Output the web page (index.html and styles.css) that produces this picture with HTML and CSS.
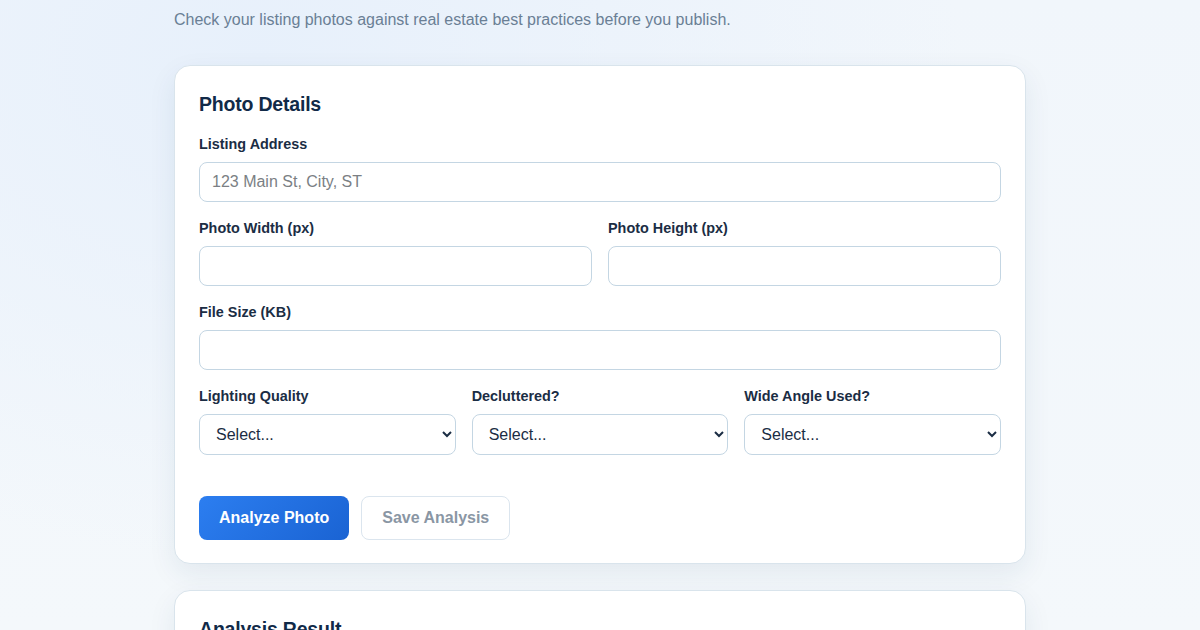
FILE: index.html
```html
<!DOCTYPE html>
<html lang="en">
<head>
<meta charset="utf-8">
<title>Listing Photo Checker</title>
<link rel="stylesheet" href="styles.css">
</head>
<body>
<main class="page">
  <p class="subtitle">Check your listing photos against real estate best practices before you publish.</p>

  <section class="card">
    <h2 class="card-title">Photo Details</h2>
    <form class="form">
      <div class="field">
        <label class="label" for="addr">Listing Address</label>
        <input class="input" id="addr" type="text" placeholder="123 Main St, City, ST">
      </div>
      <div class="row row-2">
        <div class="field">
          <label class="label" for="w">Photo Width (px)</label>
          <input class="input" id="w" type="text">
        </div>
        <div class="field">
          <label class="label" for="h">Photo Height (px)</label>
          <input class="input" id="h" type="text">
        </div>
      </div>
      <div class="field">
        <label class="label" for="size">File Size (KB)</label>
        <input class="input" id="size" type="text">
      </div>
      <div class="row row-3">
        <div class="field">
          <label class="label" for="light">Lighting Quality</label>
          <select class="select" id="light"><option>Select...</option></select>
        </div>
        <div class="field">
          <label class="label" for="declutter">Decluttered?</label>
          <select class="select" id="declutter"><option>Select...</option></select>
        </div>
        <div class="field">
          <label class="label" for="wide">Wide Angle Used?</label>
          <select class="select" id="wide"><option>Select...</option></select>
        </div>
      </div>
      <div class="actions">
        <button type="button" class="btn btn-primary">Analyze Photo</button>
        <button type="button" class="btn btn-secondary">Save Analysis</button>
      </div>
    </form>
  </section>

  <section class="card">
    <h2 class="card-title">Analysis Result</h2>
  </section>
</main>
</body>
</html>
```

FILE: styles.css
```css
* { box-sizing: border-box; }

html, body { height: 100%; }

body {
  margin: 0;
  font-family: "Liberation Sans", Arial, sans-serif;
  color: #1b2d44;
  background:
    radial-gradient(ellipse 700px 500px at 260px 60px, #e7f0fb 0%, rgba(231,240,251,0) 100%),
    linear-gradient(180deg, #f1f6fb 0%, #f4f8fb 100%);
  background-color: #f3f7fb;
  overflow: hidden;
}

.page {
  width: 852px;
  margin: 0 auto;
}

.subtitle {
  margin: 8px 0 33px;
  font-size: 16px;
  line-height: 24px;
  color: #6a7f95;
}

.card {
  background: #ffffff;
  border: 1px solid #d9e4ec;
  border-radius: 16px;
  padding: 25px 24px 23px;
  box-shadow: 0 10px 28px rgba(30, 60, 100, 0.08);
  margin-bottom: 26px;
}

.card-title {
  margin: 0 0 18px;
  font-size: 19.5px;
  line-height: 26px;
  font-weight: 700;
  color: #112a48;
  letter-spacing: -0.2px;
}

.form {
  display: flex;
  flex-direction: column;
  gap: 17px;
}

.field {
  display: flex;
  flex-direction: column;
  gap: 9px;
}

.label {
  font-size: 14.4px;
  line-height: 18px;
  font-weight: 700;
  color: #1b2d44;
}

.input,
.select {
  width: 100%;
  height: 40px;
  border: 1px solid #c4d6e3;
  border-radius: 8px;
  background: #ffffff;
  font-family: "Liberation Sans", Arial, sans-serif;
  font-size: 16px;
  color: #1b2d44;
  padding: 0 12px;
  outline: none;
}

.input::placeholder { color: #7b7f84; }

.select {
  height: 41px;
  padding: 0 12px;
}

.row {
  display: grid;
  gap: 16px;
}

.row-2 { grid-template-columns: 1fr 1fr; }
.row-3 { grid-template-columns: 1fr 1fr 1fr; }

.actions {
  display: flex;
  gap: 12px;
  margin-top: 24px;
}

.btn {
  height: 44px;
  border-radius: 8px;
  font-family: "Liberation Sans", Arial, sans-serif;
  font-size: 16px;
  font-weight: 700;
  padding: 0 20px;
  white-space: nowrap;
  cursor: pointer;
}

.btn-primary {
  border: none;
  color: #ffffff;
  background: linear-gradient(135deg, #2c7ef0 0%, #1a63d3 100%);
}

.btn-secondary {
  border: 1px solid #dbe5ee;
  background: #ffffff;
  color: #8a96a4;
}
```
